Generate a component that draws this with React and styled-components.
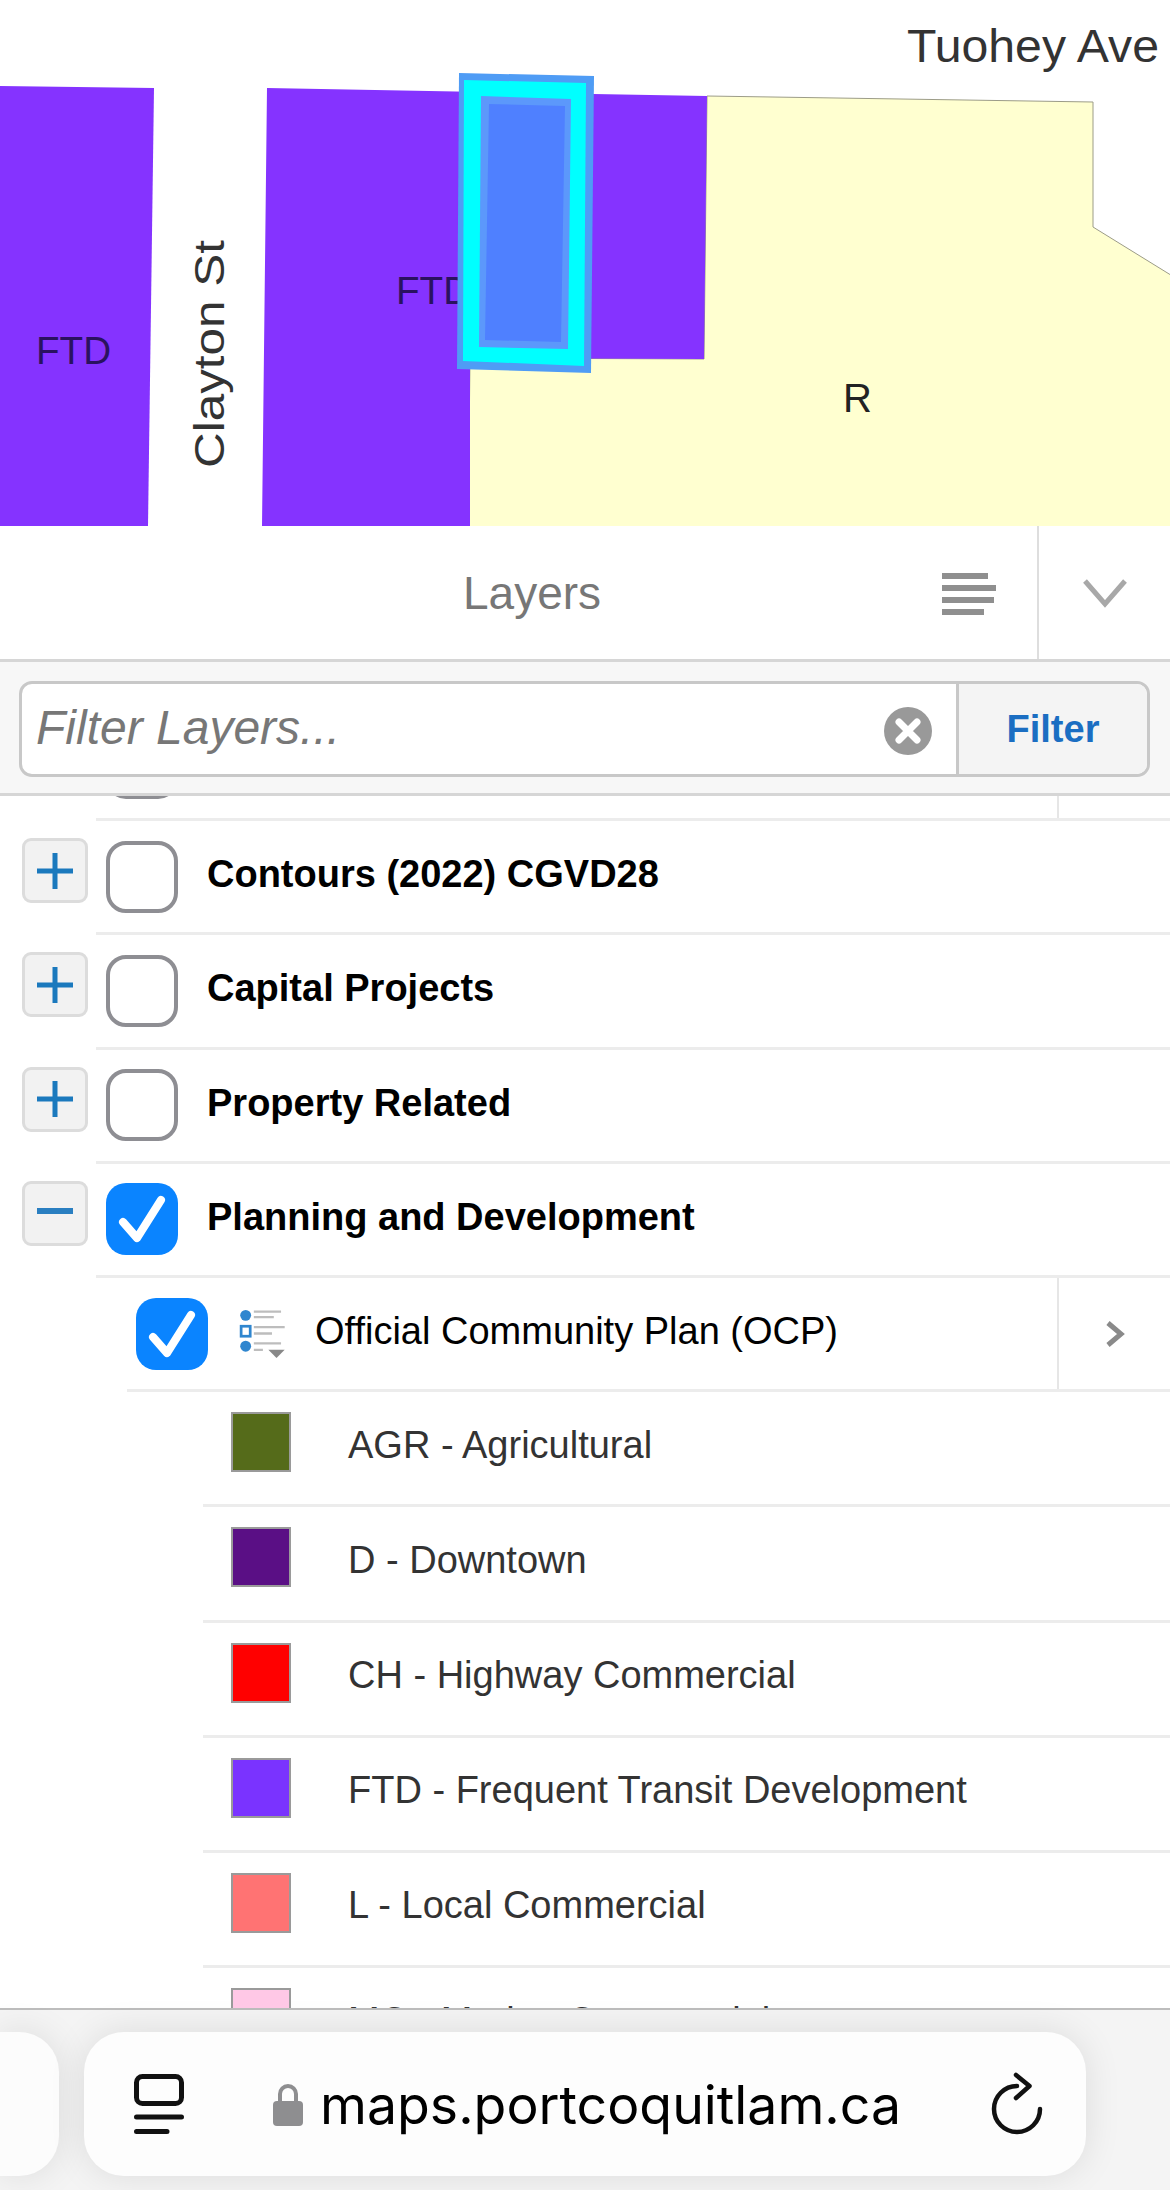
import React from "react";
import styled, { createGlobalStyle } from "styled-components";

const Global = createGlobalStyle`
  html, body { margin: 0; padding: 0; background: #fff; }
  * { box-sizing: border-box; }
`;
const Page = styled.div`
  width: 1170px; height: 2190px; display: flex; flex-direction: column; overflow: hidden;
  font-family: "Liberation Sans", Arial, sans-serif; background: #fff;
`;
const MapView = styled.svg`display: block; width: 1170px; height: 526px; flex: none;`;
const MapLabel = styled.text`font-family: "Liberation Sans", Arial, sans-serif; fill: ${p => p.$c || "#222"}; font-size: ${p => p.$s || 36}px;`;
const Header = styled.header`height: 136px; flex: none; display: flex; background: #fff; border-bottom: 3px solid #d6d6d6;`;
const HeaderTitleArea = styled.div`flex: 1; display: flex; align-items: center; position: relative;`;
const Title = styled.h1`margin: 0 0 0 463px; font-weight: 400; font-size: 46px; line-height: 1; color: #777;`;
const HeaderIcon = styled.svg`position: absolute; right: 41px; top: 47px;`;
const CollapseBox = styled.div`width: 133px; flex: none; border-left: 2px solid #dedede; display: flex; align-items: center; justify-content: center;`;
const FilterBar = styled.div`height: 134px; flex: none; background: #f7f7f7; border-bottom: 3px solid #d6d6d6; padding: 19px 20px 0 19px;`;
const FilterGroup = styled.div`height: 96px; display: flex; background: #fff; border: 3px solid #c8c8c8; border-radius: 13px; overflow: hidden;`;
const FilterInput = styled.div`flex: 1; display: flex; align-items: center; justify-content: space-between; padding: 4px 24px 0 14px;`;
const Placeholder = styled.span`font-style: italic; font-size: 48px; color: #777; position: relative; top: -4px;`;
const FilterButton = styled.div`width: 191px; flex: none; background: #f4f4f4; border-left: 3px solid #c8c8c8; display: flex; align-items: center; justify-content: center; color: #1b6ec2; font-weight: 700; font-size: 38px;`;
const List = styled.div`flex: 1; min-height: 0; overflow: hidden;`;
const Scroller = styled.div`margin-top: -89px;`;
const Row = styled.div`height: ${p => p.$h || 114.2}px; display: flex; align-items: stretch; position: relative;`;
const Gutter = styled.div`width: ${p => p.$w}px; flex: none; display: flex; align-items: flex-start; justify-content: flex-end;`;
const RowBody = styled.div`flex: 1; min-width: 0; display: flex; align-items: center; border-bottom: 3px solid #ececec; padding-left: ${p => p.$pad || 0}px;`;
const Expander = styled.div`width: 66px; height: 65px; margin: 17px 8px 0 0; background: #f2f2f2; border: 3px solid #dcdcdc; border-radius: 9px; display: flex; align-items: center; justify-content: center;`;
const Check = styled.div`
  width: 72px; height: 72px; flex: none; border-radius: 20px; display: flex; align-items: center; justify-content: center;
  background: ${p => p.$on ? "#0a84ff" : "#fff"}; border: ${p => p.$on ? "none" : "4px solid #8e8e93"};
`;
const GroupLabel = styled.span`font-weight: 700; font-size: 38px; color: #000; margin-left: 29px; margin-top: -4px;`;
const LayerLabel = styled.span`font-size: 38px; color: #000; margin-left: 29px; margin-top: -4px;`;
const TypeIcon = styled.svg`margin-left: 30px; flex: none;`;
const Chevron = styled.div`margin-left: auto; width: 113px; align-self: stretch; border-left: 2px solid #e6e6e6; display: flex; align-items: center; justify-content: center;`;
const Swatch = styled.div`width: 60px; height: 60px; flex: none; background: ${p => p.$c}; border: 2px solid #9a9a9a; margin: 0 0 12px 28px;`;
const LegendLabel = styled.span`font-size: 38px; color: #333; margin-left: 57px; margin-top: -6px;`;
const BrowserBar = styled.footer`
  height: 182px; flex: none; background: #f4f4f4; border-top: 2px solid #bdbdbd; display: flex; gap: 25px; padding-top: 22px;
`;
const SidePill = styled.div`width: 59px; height: 144px; flex: none; background: #fcfcfc; border-radius: 0 40px 40px 0; box-shadow: 0 0 36px rgba(0,0,0,.1);`;
const UrlPill = styled.div`width: 1002px; height: 144px; flex: none; background: #fdfdfd; border-radius: 40px; box-shadow: 0 0 36px rgba(0,0,0,.1); display: flex; align-items: center; padding-left: 50px;`;
const Url = styled.span`font-size: 53.6px; color: #000; margin-left: 17px; font-family: Inter, "Liberation Sans", sans-serif; white-space: nowrap;`;
const LockIcon = styled.svg`margin-left: 89px; flex: none;`;
const ReloadIcon = styled.svg`margin-left: auto; margin-right: 43px; flex: none;`;

const Tick = () => (
  <svg width="48" height="48" viewBox="0 0 48 48"><path d="M5 27 L19 43 L43 5" fill="none" stroke="#fff" strokeWidth="8" strokeLinecap="round" strokeLinejoin="round" /></svg>
);
const Plus = () => (
  <svg width="36" height="36" viewBox="0 0 36 36"><path d="M18 0V36M0 18H36" stroke="#1b79bd" strokeWidth="5" /></svg>
);
const Minus = () => (
  <svg width="36" height="36" viewBox="0 0 36 36"><path d="M0 16H36" stroke="#2a7fc1" strokeWidth="6" /></svg>
);
const Right = () => (
  <svg width="24" height="30" viewBox="0 0 24 30"><path d="M5 4 L18 15 L5 26" fill="none" stroke="#8a8a8a" strokeWidth="5" /></svg>
);

const groups = [
  ["Contours (2022) CGVD28", false],
  ["Capital Projects", false],
  ["Property Related", false],
  ["Planning and Development", true],
];
const legend = [
  ["AGR - Agricultural", "#556b1a"],
  ["D - Downtown", "#5a0f85"],
  ["CH - Highway Commercial", "#ff0000"],
  ["FTD - Frequent Transit Development", "#7a33ff"],
  ["L - Local Commercial", "#ff7373"],
  ["MC - Marine Commercial", "#ffc8e6"],
];

export default function App() {
  return (
    <Page>
      <Global />
      <MapView viewBox="0 0 1170 526">
        <rect width="1170" height="526" fill="#fff" />
        <polygon points="0,86 154,88 148,526 0,526" fill="#8533ff" />
        <polygon points="707,96 1093,102 1093,227 1174,277 1174,532 468,532 470,358 704,359" fill="#ffffd0" stroke="#9c9c88" strokeWidth="1" />
        <polygon points="267,88 707,96 704,359 470,358 470,526 262,526" fill="#8533ff" />
        <MapLabel x="907" y="62" $s={46} $c="#333" textLength="252" lengthAdjust="spacingAndGlyphs">Tuohey Ave</MapLabel>
        <MapLabel x="36" y="364" $s={38} $c="#2a1260" textLength="75" lengthAdjust="spacingAndGlyphs">FTD</MapLabel>
        <MapLabel x="396" y="304" $s={38} $c="#2a1260" textLength="75" lengthAdjust="spacingAndGlyphs">FTD</MapLabel>
        <MapLabel x="843" y="412" $s={40} $c="#222">R</MapLabel>
        <MapLabel transform="translate(224 468) rotate(-90)" $s={42} $c="#333" textLength="228" lengthAdjust="spacingAndGlyphs">Clayton St</MapLabel>
        <polygon points="459,73 594,76 591,373 457,369" fill="#4f9cf5" />
        <polygon points="464,80 586,83 584,366 463,361" fill="#00ffff" />
        <polygon points="481,96 571,99 568,349 479,347" fill="#5c98fb" />
        <polygon points="489,104 565,106 561,342 485,340" fill="#4f80ff" />
      </MapView>
      <Header>
        <HeaderTitleArea>
          <Title>Layers</Title>
          <HeaderIcon width="54" height="42" viewBox="0 0 54 42">
            <path d="M0 3H46M0 15H54M0 27H52M0 39H42" stroke="#8f8f8f" strokeWidth="6" />
          </HeaderIcon>
        </HeaderTitleArea>
        <CollapseBox>
          <svg width="46" height="32" viewBox="0 0 46 32"><path d="M3 4 L23 27 L43 4" fill="none" stroke="#a8a8a8" strokeWidth="5" /></svg>
        </CollapseBox>
      </Header>
      <FilterBar>
        <FilterGroup>
          <FilterInput>
            <Placeholder>Filter Layers...</Placeholder>
            <svg width="48" height="48" viewBox="0 0 48 48">
              <circle cx="24" cy="24" r="24" fill="#999" />
              <path d="M15 15L33 33M33 15L15 33" stroke="#fff" strokeWidth="7" strokeLinecap="round" />
            </svg>
          </FilterInput>
          <FilterButton>Filter</FilterButton>
        </FilterGroup>
      </FilterBar>
      <List>
        <Scroller>
          <Row>
            <Gutter $w={96} />
            <RowBody $pad={10}>
              <Check />
              <Chevron />
            </RowBody>
          </Row>
          {groups.map(([label, on]) => (
            <Row key={label}>
              <Gutter $w={96}><Expander>{on ? <Minus /> : <Plus />}</Expander></Gutter>
              <RowBody $pad={10}>
                <Check $on={on}>{on && <Tick />}</Check>
                <GroupLabel>{label}</GroupLabel>
              </RowBody>
            </Row>
          ))}
          <Row>
            <Gutter $w={127} />
            <RowBody $pad={9}>
              <Check $on><Tick /></Check>
              <TypeIcon width="48" height="49" viewBox="0 0 50 54">
                <circle cx="7" cy="7" r="6" fill="#2f86cf" />
                <rect x="2" y="19" width="10" height="11" fill="#fff" stroke="#2f86cf" strokeWidth="3" />
                <circle cx="7" cy="41" r="6" fill="#2f86cf" />
                <path d="M16 3H46M16 9H38M16 20H50M16 27H36M16 38H46M16 45H26" stroke="#bdbdbd" strokeWidth="2.5" />
                <path d="M32 45H50L41 54Z" fill="#888" />
              </TypeIcon>
              <LayerLabel>Official Community Plan (OCP)</LayerLabel>
              <Chevron><Right /></Chevron>
            </RowBody>
          </Row>
          {legend.map(([label, c]) => (
            <Row key={label} $h={115.2}>
              <Gutter $w={203} />
              <RowBody>
                <Swatch $c={c} />
                <LegendLabel>{label}</LegendLabel>
              </RowBody>
            </Row>
          ))}
        </Scroller>
      </List>
      <BrowserBar>
        <SidePill />
        <UrlPill>
          <svg width="50" height="60" viewBox="0 0 50 60">
            <rect x="2.5" y="2.5" width="45" height="27" rx="6" fill="none" stroke="#111" strokeWidth="5" />
            <path d="M2.5 43H47.5M2.5 57.5H33" stroke="#111" strokeWidth="5" strokeLinecap="round" />
          </svg>
          <LockIcon width="30" height="43" viewBox="0 0 30 43">
            <path d="M7 20V11a8 8 0 0 1 16 0V20" fill="none" stroke="#8e8e90" strokeWidth="4" />
            <rect x="0" y="18" width="30" height="25" rx="4" fill="#8e8e90" />
          </LockIcon>
          <Url>maps.portcoquitlam.ca</Url>
          <ReloadIcon width="52" height="64" viewBox="0 0 52 64">
            <path d="M49 37A23 23 0 1 1 26 14" fill="none" stroke="#111" strokeWidth="4.5" strokeLinecap="round" />
            <path d="M25 3L38.5 14L25 26" fill="none" stroke="#111" strokeWidth="4.5" strokeLinecap="round" strokeLinejoin="round" />
          </ReloadIcon>
        </UrlPill>
      </BrowserBar>
    </Page>
  );
}
